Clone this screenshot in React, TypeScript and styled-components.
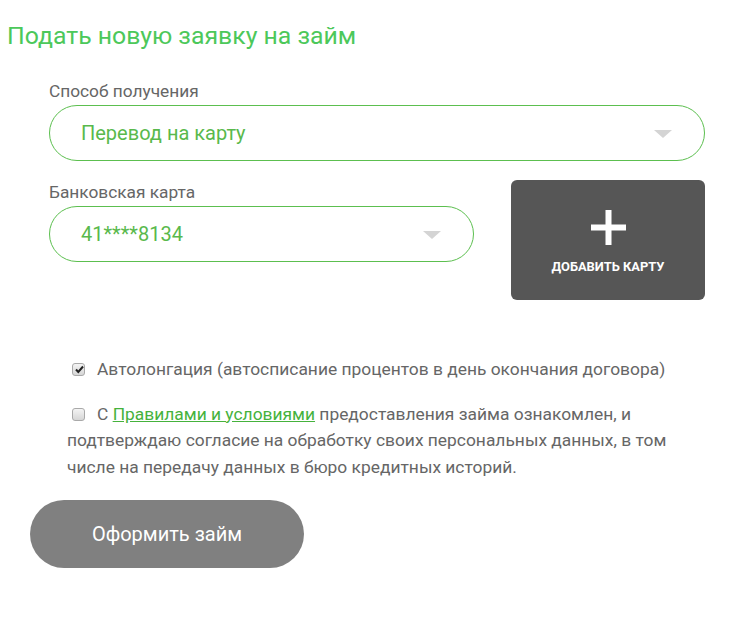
import React, { useState } from "react"
import styled, { createGlobalStyle } from "styled-components"

const GlobalStyle = createGlobalStyle`
  html, body {
    margin: 0;
    padding: 0;
    background: #fff;
    font-family: Roboto, "Liberation Sans", sans-serif;
  }
`

const Page = styled.div`
  width: 755px;
  height: 621px;
  box-sizing: border-box;
  padding: 21px 0 0 7px;
`

const Title = styled.h1`
  margin: 0;
  font-size: 24.8px;
  font-weight: 400;
  color: #4cc85a;
  line-height: 30px;
`

const Form = styled.div`
  padding: 30px 0 0 42px;
  width: 656px;
`

const Label = styled.div`
  font-size: 17.3px;
  color: #666;
  line-height: 20px;
  margin-bottom: 4px;
`

const Field = styled.div`
  margin-bottom: 19px;
`

const CardField = styled.div`
  padding-top: 2px;
`

const Select = styled.div<{ $width: number }>`
  width: ${p => p.$width}px;
  height: 56px;
  box-sizing: border-box;
  border: 1px solid #5cbf4f;
  border-radius: 28px;
  display: flex;
  align-items: center;
  justify-content: space-between;
  padding: 0 32px 0 31px;
  font-size: 20px;
  color: #59b94c;
`

const Arrow = styled.span`
  width: 0;
  height: 0;
  border-left: 9px solid transparent;
  border-right: 9px solid transparent;
  border-top: 8px solid #d4d4d4;
  margin-top: 2px;
`

const CardRow = styled.div`
  display: flex;
  align-items: flex-start;
  gap: 37px;
`

const AddCard = styled.button`
  width: 194px;
  height: 120px;
  background: #565656;
  border: none;
  border-radius: 6px;
  color: #fff;
  display: flex;
  flex-direction: column;
  align-items: center;
  padding: 30px 0 0;
  box-sizing: border-box;
  font-family: Roboto, "Liberation Sans", sans-serif;
  cursor: pointer;
`

const AddText = styled.span`
  margin-top: 14px;
  font-size: 12.9px;
  font-weight: 700;
  line-height: 15px;
`

const Checks = styled.div`
  margin-top: 56px;
  padding-left: 60px;
  width: 625px;
`

const CheckLine = styled.label<{ $gap?: number }>`
  display: block;
  font-size: 17.4px;
  line-height: 26.5px;
  color: #666;
  cursor: pointer;
  margin-bottom: ${p => p.$gap ?? 0}px;
`

const Box = styled.span<{ $checked: boolean }>`
  display: inline-block;
  vertical-align: -1px;
  width: 13px;
  height: 13px;
  box-sizing: border-box;
  border: 1px solid #a9a9a9;
  border-radius: 3px;
  background: linear-gradient(#f4f4f4, #d6d6d6);
  margin: 0 12px 0 5px;
  position: relative;
`

const Link = styled.a`
  color: #45b23c;
  text-decoration: underline;
`

const Submit = styled.button`
  display: block;
  margin: 20px 0 0 23px;
  width: 274px;
  height: 68px;
  border: none;
  border-radius: 34px;
  background: #808080;
  color: #fff;
  font-size: 20px;
  font-family: Roboto, "Liberation Sans", sans-serif;
  cursor: pointer;
`

const Tick = () => (
  <svg width="11" height="11" viewBox="0 0 11 11" style={{ position: "absolute", left: 1, top: 0 }}>
    <path d="M2 5.5 L4.3 8 L9 2.5" fill="none" stroke="#222" strokeWidth="2" />
  </svg>
)

const Plus = () => (
  <svg width="35" height="35" viewBox="0 0 35 35">
    <rect x="14.5" y="0" width="6" height="35" fill="#fff" />
    <rect x="0" y="14.5" width="35" height="6" fill="#fff" />
  </svg>
)

const App = () => {
  const [auto, setAuto] = useState(true)
  const [agree, setAgree] = useState(false)
  return (
    <Page>
      <GlobalStyle />
      <Title>Подать новую заявку на займ</Title>
      <Form>
        <Field>
          <Label>Способ получения</Label>
          <Select $width={656}>
            <span>Перевод на карту</span>
            <Arrow />
          </Select>
        </Field>
        <CardRow>
          <CardField>
            <Label>Банковская карта</Label>
            <Select $width={425}>
              <span>41****8134</span>
              <Arrow />
            </Select>
          </CardField>
          <AddCard>
            <Plus />
            <AddText>ДОБАВИТЬ КАРТУ</AddText>
          </AddCard>
        </CardRow>
      </Form>
      <Checks>
        <CheckLine $gap={18} onClick={() => setAuto(!auto)}>
          <Box $checked={auto}>{auto && <Tick />}</Box>
          Автолонгация (автосписание процентов в день окончания договора)
        </CheckLine>
        <CheckLine onClick={() => setAgree(!agree)}>
          <Box $checked={agree}>{agree && <Tick />}</Box>
          С <Link href="#">Правилами и условиями</Link> предоставления займа ознакомлен, и
          подтверждаю согласие на обработку своих персональных данных, в том
          числе на передачу данных в бюро кредитных историй.
        </CheckLine>
      </Checks>
      <Submit>Оформить займ</Submit>
    </Page>
  )
}

export default App
